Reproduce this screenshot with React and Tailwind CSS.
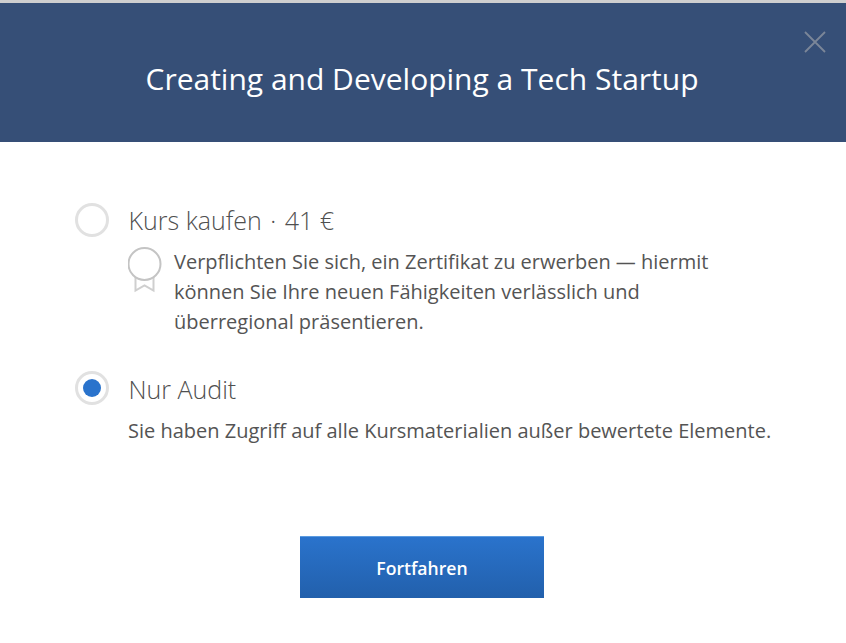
const font = { fontFamily: '"Open Sans", sans-serif' };

function CertIcon() {
  return (
    <svg width="34" height="46" viewBox="0 0 34 46" fill="none" className="shrink-0">
      <path d="M7.5 28 V43.5 L16.5 38.5 L25.5 43.5 V28" stroke="#cfcfcf" strokeWidth="2" fill="#fff" />
      <circle cx="16.5" cy="17" r="16" stroke="#c4c4c4" strokeWidth="2" fill="#fff" />
    </svg>
  );
}

export default function App() {
  return (
    <div className="w-[846px] h-[643px] bg-white flex flex-col overflow-hidden" style={font}>
      <div className="h-[142px] shrink-0 bg-[#364f77] border-t-[3px] border-[#cfcfcf] relative flex items-center justify-center">
        <h1 className="text-[30px] leading-[40px] text-white mt-[13px] mr-[2px]">Creating and Developing a Tech Startup</h1>
        <svg width="24" height="24" viewBox="0 0 24 24" className="absolute right-[19px] top-[27px]" stroke="#7b8698" strokeWidth="1.8">
          <path d="M2 2 L22 22 M22 2 L2 22" />
        </svg>
      </div>

      <div className="flex flex-col pl-[75px] pt-[60px]">
        <div className="flex items-center h-[36px]">
          <div className="w-[34px] h-[34px] rounded-full border-[3px] border-[#e1e1e1] bg-white" />
          <div className="ml-[19.5px] text-[25px] leading-[36px] font-light text-[#4f4f4f] mt-[-1px] whitespace-nowrap">
            Kurs kaufen<span className="mx-[8.5px]">·</span>41 €
          </div>
        </div>
        <div className="flex pl-[53px] mt-[9px]">
          <div className="mr-[12px] w-[34px]"><CertIcon /></div>
          <p className="text-[20px] leading-[30px] text-[#545454] w-[570px]">
            Verpflichten Sie sich, ein Zertifikat zu erwerben — hiermit können Sie Ihre neuen Fähigkeiten verlässlich und überregional präsentieren.
          </p>
        </div>

        <div className="flex items-center h-[36px] mt-[33px]">
          <div className="w-[34px] h-[34px] rounded-full border-[3px] border-[#e1e1e1] bg-white flex items-center justify-center">
            <div className="w-[18px] h-[18px] rounded-full bg-[#2a73cc]" />
          </div>
          <div className="ml-[19.5px] text-[25px] leading-[36px] font-light text-[#4f4f4f] mt-[1px]">Nur Audit</div>
        </div>
        <p className="ml-[53px] mt-[10px] text-[20px] leading-[30px] text-[#545454] whitespace-nowrap">
          Sie haben Zugriff auf alle Kursmaterialien außer bewertete Elemente.
        </p>
      </div>

      <div className="flex justify-center mt-[90px] pr-[2px]">
        <button className="w-[244px] h-[62px] pt-[2px] bg-gradient-to-b from-[#2a73cc] to-[#2260ac] border-t border-[#5b9be0] text-white font-semibold text-[17.6px]">
          Fortfahren
        </button>
      </div>
    </div>
  );
}
